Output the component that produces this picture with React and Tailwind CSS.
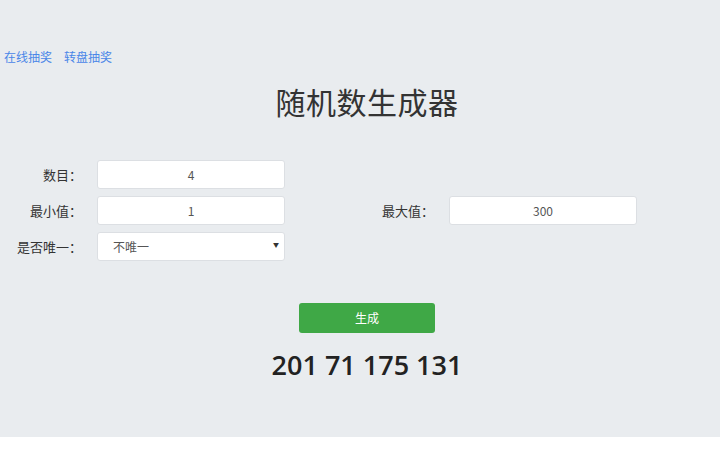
import React, { useState } from "react";

const cjk = { fontFamily: '"Noto Sans CJK SC", "Noto Sans", sans-serif' };

const Field = ({ label, value }) => (
  <div className="flex items-center w-[352px]">
    <label className="w-[82px] text-right text-[13px] text-[#333]">{label}</label>
    <input
      readOnly
      value={value}
      className="ml-[15px] w-[188px] h-[29px] bg-white border border-[#dcdfe3] rounded-[3px] text-center text-[12px] text-[#555] outline-none"
    />
  </div>
);

export default function App() {
  const [numbers] = useState([201, 71, 175, 131]);

  return (
    <div style={cjk} className="w-full">
      <div className="bg-[#e9ecef] h-[437px] pt-[50px]">
        {/* 顶部链接 */}
        <div className="flex gap-[12px] pl-[4px] text-[12px] leading-[14px] text-[#4a86e8]">
          <a href="#">在线抽奖</a>
          <a href="#">转盘抽奖</a>
        </div>

        <div className="flex justify-center pl-[14px] mt-[19px]">
          <h1 className="text-[30px] leading-[36px] text-[#333] tracking-[0.5px]">随机数生成器</h1>
        </div>

        {/* 表单 */}
        <div className="mt-[41px] flex flex-col">
          <div className="flex h-[29px]">
            <Field label="数目：" value="4" />
          </div>
          <div className="flex h-[29px] mt-[7px]">
            <Field label="最小值：" value="1" />
            <Field label="最大值：" value="300" />
          </div>
          <div className="flex h-[29px] mt-[7px]">
            <div className="flex items-center w-[352px]">
              <label className="w-[82px] text-right text-[13px] text-[#333]">是否唯一：</label>
              <div className="relative ml-[15px] w-[188px] h-[29px]">
                <select
                  defaultValue="no"
                  style={cjk}
                  className="appearance-none w-full h-full bg-white border border-[#dcdfe3] rounded-[3px] pl-[15px] text-[12px] text-[#555] outline-none"
                >
                  <option value="no">不唯一</option>
                  <option value="yes">唯一</option>
                </select>
                <span className="absolute right-[6px] top-[9px] text-[6px] leading-[8px] text-[#333] pointer-events-none">▼</span>
              </div>
            </div>
          </div>
        </div>

        {/* 生成按钮与结果 */}
        <div className="flex flex-col items-center pl-[14px] mt-[42px]">
          <button className="w-[136px] h-[30px] bg-[#3fa846] rounded-[3px] text-white text-[12px]">
            生成
          </button>
          <div
            style={{ fontFamily: '"Open Sans", sans-serif' }}
            className="mt-[15px] text-[27px] leading-[34px] font-semibold text-[#222]"
          >
            {numbers.join(" ")}
          </div>
        </div>
      </div>
    </div>
  );
}
